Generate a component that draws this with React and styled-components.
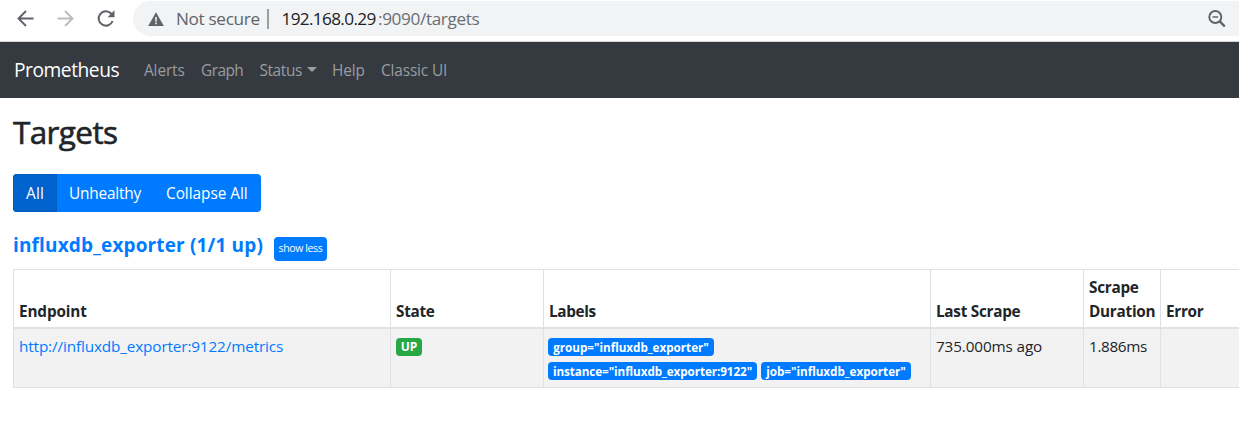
import React from "react";
import styled, { createGlobalStyle } from "styled-components";

const GlobalStyle = createGlobalStyle`
  *, *::before, *::after { box-sizing: border-box; }
  body {
    margin: 0;
    background: #fff;
    color: #212529;
    font-family: "Open Sans", "Noto Sans", sans-serif;
    font-size: 15.3px;
    line-height: 24px;
    overflow: hidden;
  }
`;

const Page = styled.div`
  height: 434px;
  overflow: hidden;
`;

const BrowserBar = styled.header`
  display: flex;
  align-items: flex-start;
  height: 42px;
  padding-top: 1px;
  border-bottom: 1px solid #d5d7db;
`;

const BrowserButtons = styled.div`
  display: flex;
  align-items: center;
  width: 133px;
  height: 35px;
  padding-left: 16px;
  gap: 20px;
  svg { display: block; width: 20px; height: 20px; }
`;

const AddressBar = styled.div`
  display: flex;
  align-items: center;
  flex: 1;
  height: 35px;
  padding: 0 13px 0 14px;
  border-radius: 18px 0 0 18px;
  background: #f1f3f4;
  font-size: 17.2px;
  svg { display: block; flex: none; }
`;

const Security = styled.span`
  width: 91px;
  margin-left: 11px;
  color: #5f6368;
  white-space: nowrap;
  letter-spacing: -0.34px;
`;

const Divider = styled.span`
  width: 2px;
  height: 20px;
  margin-right: 12.5px;
  background: #9b9ea2;
`;

const Host = styled.span`
  width: 96.5px;
  color: #202124;
  white-space: nowrap;
  letter-spacing: -0.66px;
`;

const UrlPath = styled.span`
  flex: 1;
  color: #6a6e73;
  white-space: nowrap;
  letter-spacing: -0.37px;
`;

const Navbar = styled.nav`
  display: flex;
  align-items: center;
  height: 56px;
  padding: 1px 14px 0;
  background: #343a40;
`;

const Brand = styled.a`
  width: 130px;
  margin-top: -2px;
  color: #fff;
  font-size: 19.2px;
  letter-spacing: -0.46px;
`;

const NavLink = styled.a`
  display: flex;
  align-items: center;
  width: ${(p) => p.$width}px;
  padding-top: 1px;
  color: #9a9da0;
  font-size: 15.4px;
  letter-spacing: ${(p) => p.$tracking}px;
  white-space: nowrap;
`;

const Caret = styled.span`
  margin: -3px 0 0 4.6px;
  border-top: 5px solid currentColor;
  border-left: 5px solid transparent;
  border-right: 5px solid transparent;
`;

const Content = styled.main`
  padding: 15px 0 0 13px;
`;

const Title = styled.h2`
  margin: 0 0 22.6px;
  font-size: 31.5px;
  font-weight: 500;
  line-height: 38.4px;
  letter-spacing: -0.62px;
  -webkit-text-stroke: 0.6px currentColor;
`;

const ButtonGroup = styled.div`
  display: flex;
  width: 248px;
  height: 38px;
  border-radius: 4px;
  overflow: hidden;
`;

const GroupButton = styled.button`
  width: ${(p) => p.$width}px;
  padding: 2px 0 0 ${(p) => p.$inset}px;
  border: ${(p) => (p.$active ? "1px solid #005cbf" : "0")};
  background: ${(p) => (p.$active ? "#0062cc" : "#007bff")};
  color: #fff;
  font: 15.4px/24px "Open Sans", sans-serif;
  letter-spacing: ${(p) => p.$tracking}px;
  text-align: left;
  white-space: nowrap;
`;

const PoolHeading = styled.h3`
  display: flex;
  align-items: flex-start;
  height: 57px;
  margin: 0;
  padding-top: 21px;
`;

const PoolLink = styled.a`
  width: 261px;
  color: #007bff;
  font-size: 19px;
  font-weight: 700;
  letter-spacing: 0.14px;
  white-space: nowrap;
`;

const ToggleButton = styled.button`
  width: 53px;
  height: 24px;
  margin-top: 4px;
  padding: 0 0 3px;
  border: 0;
  border-radius: 4px;
  background: #007bff;
  color: #fff;
  font: 10.5px/16px "Open Sans", sans-serif;
  letter-spacing: -0.38px;
  white-space: nowrap;
`;

const Table = styled.table`
  width: 1238px;
  table-layout: fixed;
  border-collapse: collapse;
`;

const Column = styled.col`
  width: ${(p) => p.$width}px;
`;

const HeadCell = styled.th`
  height: 58px;
  padding: 4px 5px;
  border: 1px solid #dee2e6;
  border-bottom-width: 2px;
  font-weight: 700;
  line-height: 24px;
  text-align: left;
  vertical-align: bottom;
  letter-spacing: ${(p) => p.$tracking}px;
`;

const Cell = styled.td`
  height: 60px;
  padding: 5px 5px 4px;
  border: 1px solid #dee2e6;
  background: #f2f2f2;
  vertical-align: top;
  letter-spacing: ${(p) => p.$tracking || 0}px;
  white-space: nowrap;
`;

const EndpointLink = styled.a`
  color: #007bff;
`;

const BadgeList = styled.div`
  display: flex;
  flex-wrap: wrap;
  gap: 6px 4px;
  padding-top: 4px;
  margin-left: ${(p) => p.$shift || 0}px;
`;

const Badge = styled.span`
  width: ${(p) => p.$width}px;
  height: 18px;
  border-radius: 4px;
  background: ${(p) => (p.$color === "success" ? "#28a745" : "#007bff")};
  color: #fff;
  font-size: ${(p) => (p.$color === "success" ? 12 : 11.7)}px;
  font-weight: 700;
  line-height: 18px;
  text-align: center;
  letter-spacing: ${(p) => p.$tracking}px;
`;

const links = [
  { text: "Alerts", width: 57, tracking: -0.12 },
  { text: "Graph", width: 58.4, tracking: -0.55 },
  { text: "Status", width: 72.6, tracking: -0.35, caret: true },
  { text: "Help", width: 49, tracking: -0.15 },
  { text: "Classic UI", width: 70, tracking: -0.14 },
];

const filters = [
  { text: "All", width: 44, inset: 12, tracking: 0.2, active: true },
  { text: "Unhealthy", width: 96, inset: 12, tracking: -0.2 },
  { text: "Collapse All", width: 108, inset: 13, tracking: -0.04 },
];

const columns = [
  { text: "Endpoint", width: 377, tracking: -0.14 },
  { text: "State", width: 153, tracking: -0.3 },
  { text: "Labels", width: 387, tracking: -0.36 },
  { text: "Last Scrape", width: 153, tracking: -0.27 },
  { text: "Scrape Duration", width: 77, tracking: -0.26 },
  { text: "Error", width: 90, tracking: -0.3 },
];

const labels = [
  { text: 'group="influxdb_exporter"', width: 166, tracking: -0.02 },
  { text: 'instance="influxdb_exporter:9122"', width: 209, tracking: -0.08 },
  { text: 'job="influxdb_exporter"', width: 150, tracking: -0.02 },
];

const BackIcon = () => (
  <svg viewBox="0 0 20 20" fill="none" stroke="#5f6368" strokeWidth="1.9">
    <path d="M17.5 9.5H3M10 2 2.5 9.5l7.5 7.5" />
  </svg>
);

const ForwardIcon = () => (
  <svg viewBox="0 0 20 20" fill="none" stroke="#babcbe" strokeWidth="1.9">
    <path d="M1.500 9.500H16M9 2l7.500 7.500L9 17" />
  </svg>
);

const ReloadIcon = () => (
  <svg viewBox="0 0 20 20" fill="none" stroke="#5f6368" strokeWidth="2">
    <path d="M16.600 12a7.200 7.200 0 1 1-1.500-7.500l1.500 1.500" />
    <path d="M18.500 1.300v6.900h-6.900z" fill="#5f6368" stroke="none" />
  </svg>
);

const WarningIcon = () => (
  <svg width="18" height="16" viewBox="0 0 18 16">
    <path d="M9 1.300 16.800 15H1.200z" fill="#5f6368" />
    <path d="M9 6v4.500M9 11.600v1.700" stroke="#f1f3f4" strokeWidth="1.600" />
  </svg>
);

const ZoomOutIcon = () => (
  <svg width="18" height="18" viewBox="0 0 18 18" fill="none" stroke="#5f6368" strokeWidth="1.900">
    <circle cx="7.300" cy="7" r="6" />
    <path d="M11.500 11.200l5.300 5.300" strokeWidth="2.400" />
    <path d="M4.500 7h5.600" strokeWidth="1.500" />
  </svg>
);

export default function App() {
  return (
    <Page>
      <GlobalStyle />
      <BrowserBar>
        <BrowserButtons>
          <BackIcon />
          <ForwardIcon />
          <ReloadIcon />
        </BrowserButtons>
        <AddressBar>
          <WarningIcon />
          <Security>Not secure</Security>
          <Divider />
          <Host>192.168.0.29</Host>
          <UrlPath>:9090/targets</UrlPath>
          <ZoomOutIcon />
        </AddressBar>
      </BrowserBar>
      <Navbar>
        <Brand>Prometheus</Brand>
        {links.map((link) => (
          <NavLink key={link.text} $width={link.width} $tracking={link.tracking}>
            {link.text}
            {link.caret && <Caret />}
          </NavLink>
        ))}
      </Navbar>
      <Content>
        <Title>Targets</Title>
        <ButtonGroup>
          {filters.map((f) => (
            <GroupButton
              key={f.text}
              $width={f.width}
              $inset={f.inset}
              $tracking={f.tracking}
              $active={f.active}
            >
              {f.text}
            </GroupButton>
          ))}
        </ButtonGroup>
        <PoolHeading>
          <PoolLink>influxdb_exporter (1/1 up)</PoolLink>
          <ToggleButton>show less</ToggleButton>
        </PoolHeading>
        <Table>
          <colgroup>
            {columns.map((c) => (
              <Column key={c.text} $width={c.width} />
            ))}
          </colgroup>
          <thead>
            <tr>
              {columns.map((c) => (
                <HeadCell key={c.text} $tracking={c.tracking}>
                  {c.text}
                </HeadCell>
              ))}
            </tr>
          </thead>
          <tbody>
            <tr>
              <Cell $tracking={-0.136}>
                <EndpointLink>http://influxdb_exporter:9122/metrics</EndpointLink>
              </Cell>
              <Cell>
                <BadgeList>
                  <Badge $color="success" $width={26} $tracking={-0.1}>
                    UP
                  </Badge>
                </BadgeList>
              </Cell>
              <Cell>
                <BadgeList $shift={-1}>
                  {labels.map((l) => (
                    <Badge key={l.text} $width={l.width} $tracking={l.tracking}>
                      {l.text}
                    </Badge>
                  ))}
                </BadgeList>
              </Cell>
              <Cell $tracking={-0.14}>735.000ms ago</Cell>
              <Cell $tracking={-0.35}>1.886ms</Cell>
              <Cell />
            </tr>
          </tbody>
        </Table>
      </Content>
    </Page>
  );
}
